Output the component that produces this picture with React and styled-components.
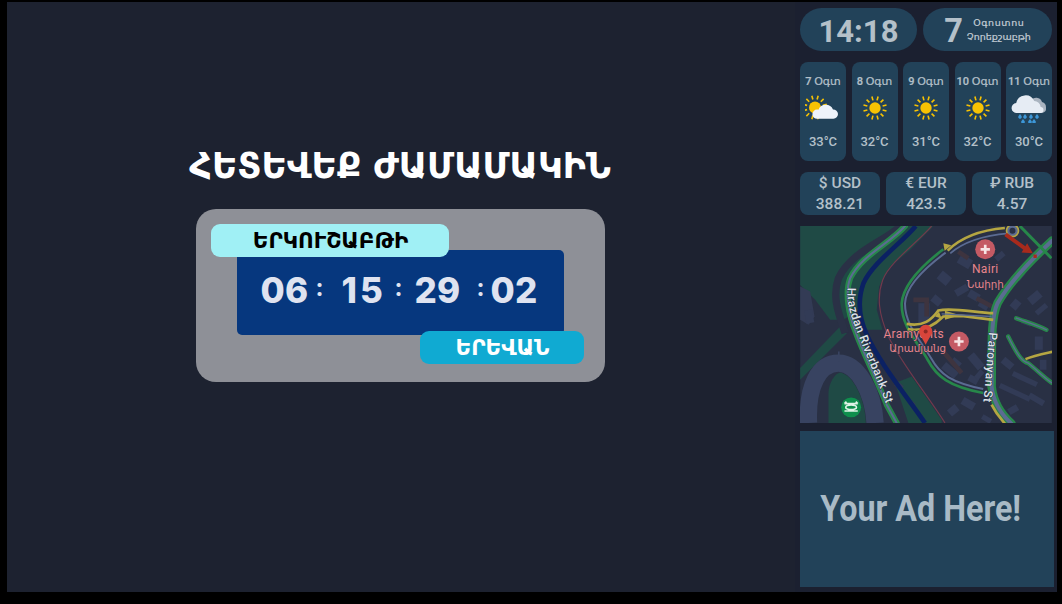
import React from "react";
import styled, { createGlobalStyle } from "styled-components";

const Global = createGlobalStyle`
  html, body { margin: 0; padding: 0; background: #000; }
  #root { width: 1062px; height: 604px; overflow: hidden; }
`;

const Screen = styled.div`
  width: 1062px; height: 604px; box-sizing: border-box; background: #000;
  padding: 2px 5px 12px 7px; display: flex;
  font-family: Roboto, "DejaVu Sans", sans-serif;
`;
const Main = styled.main`
  flex: 1; background: #1d2230; display: flex; flex-direction: column; align-items: center;
  padding: 146px 2px 0 0; min-width: 0;
`;
const Title = styled.h1`
  margin: 0; color: #fff; font: 700 34.8px/36px "DejaVu Sans", sans-serif; white-space: nowrap;
`;
const Card = styled.section`
  position: relative; margin-top: 25px; width: 409px; height: 173px; box-sizing: border-box;
  background: #8e9097; border-radius: 20px; padding: 41px 41px 0 41px;
`;
const Timer = styled.div`
  width: 327px; height: 85px; background: #06377e; border-radius: 5px;
  display: flex; align-items: flex-start; padding: 20px 0 0 24px; box-sizing: border-box;
  color: #dfe3f0; font: 800 35px/40px Inter, sans-serif;
`;
const Seg = styled.span`
  width: ${p => p.$w}px; flex: none; letter-spacing: ${p => p.$ls || 0.3}px;
`;
const Colon = styled.span`
  width: ${p => p.$w}px; flex: none; font-size: 24px; font-weight: 700; line-height: 36px; padding-left: 1px; box-sizing: border-box;
`;
const Tag = styled.div`
  position: absolute; height: 33px; border-radius: 9px; display: flex; align-items: center; justify-content: center;
  padding-left: 2px; box-sizing: border-box;
  font: 700 21.5px/1 "DejaVu Sans", sans-serif;
  background: ${p => p.$bg}; color: ${p => p.$fg};
  width: ${p => p.$w}px; left: ${p => p.$l}px; top: ${p => p.$t}px;
`;
const Side = styled.aside`
  width: 262px; background: #1b2030; display: flex; flex-direction: column;
  padding: 6px 0 0 5px; box-sizing: border-box;
`;
const TopRow = styled.div`
  display: flex; gap: 6px; width: 252px;
`;
const Pill = styled.div`
  height: 43px; border-radius: 22px; background: #224259; color: #b4c0c9;
  display: flex; align-items: center; justify-content: center; box-sizing: border-box;
  width: ${p => p.$w}px;
`;
const Clock = styled.span`
  font: 700 31px/1 Roboto, sans-serif; margin-top: 3px;
`;
const DayNum = styled.span`
  font: 700 32.5px/1 Roboto, sans-serif; margin: 3px 4px 0 0;
`;
const DateText = styled.div`
  display: flex; flex-direction: column; align-items: center; gap: 3px;
  font: 500 9.5px/11px "DejaVu Sans", sans-serif; color: #c4ced6; -webkit-text-stroke: 0.2px #c4ced6;
  span:first-child { letter-spacing: 0.6px; }
`;
const WeatherRow = styled.div`
  display: flex; justify-content: space-between; width: 252px; margin-top: 11px;
`;
const Day = styled.div`
  width: 46px; height: 99px; background: #224259; border-radius: 8px; color: #b4c0c9;
  display: flex; flex-direction: column; align-items: center; box-sizing: border-box; padding-top: 13px;
`;
const DayName = styled.div`
  font: 500 11px/14px Roboto, "DejaVu Sans", sans-serif; white-space: nowrap; height: 14px; -webkit-text-stroke: 0.2px #b4c0c9;
`;
const IconBox = styled.div`
  margin-top: 6px; width: 36px; height: 28px; display: flex; justify-content: center; flex: none;
`;
const Temp = styled.div`
  margin-top: 11px; font: 500 13px/16px Roboto, sans-serif;
`;
const RateRow = styled.div`
  display: flex; justify-content: space-between; width: 252px; margin-top: 11px;
`;
const Rate = styled.div`
  width: 80px; height: 43px; background: #224259; border-radius: 8px; color: #b4c0c9;
  display: flex; flex-direction: column; align-items: center; justify-content: center;
  font: 500 15.5px/21px Roboto, "DejaVu Sans", sans-serif;
`;
const MapBox = styled.div`
  margin-top: 11px; width: 252px; height: 197px; overflow: hidden; line-height: 0;
`;
const Ad = styled.div`
  margin-top: 8px; width: 254px; height: 156px; background: #224259; color: #a9bac6;
  display: flex; align-items: center; justify-content: center; padding-right: 13px; box-sizing: border-box;
  font: 700 37.5px/1 Roboto, sans-serif; white-space: nowrap;
`;
const AdText = styled.span`
  display: inline-block; transform: scaleX(0.86);
`;

const Sun = ({ cx = 16, cy = 13, r = 5.7, rays = 12 }) => (
  <g>
    {Array.from({ length: rays }).map((_, i) => {
      const a = (i * 2 * Math.PI) / rays + Math.PI / 12;
      return (
        <line key={i}
          x1={cx + Math.cos(a) * (r + 2.2)} y1={cy + Math.sin(a) * (r + 2.2)}
          x2={cx + Math.cos(a) * (r + 6.2)} y2={cy + Math.sin(a) * (r + 6.2)}
          stroke="#f7c203" strokeWidth="1.6" />
      );
    })}
    <circle cx={cx} cy={cy} r={r} fill="#f7c203" />
  </g>
);
const SunIcon = () => <svg width="32" height="28" viewBox="0 0 32 28"><Sun /></svg>;
const PartlyIcon = () => (
  <svg width="36" height="28" viewBox="0 0 36 28">
    <Sun cx={10} cy={12.5} r={6} />
    <path transform="translate(3 0.8)" d="M9 23a4.6 4.6 0 0 1 0-9.2c.8 0 1 .1 1.4.2A8 8 0 0 1 25 13.6a4.8 4.8 0 0 1 5 4.6A4.8 4.8 0 0 1 25.4 23Z" fill="#eef3fa" />
  </svg>
);
const RainIcon = () => (
  <svg width="36" height="28" viewBox="0 0 36 28">
    <path d="M20 6a6 6 0 0 1 11 1a5.5 5.5 0 0 1 4 5.5a5 5 0 0 1 -4 5.5H24Z" fill="#aab4c0" />
    <path d="M6 18a5 5 0 0 1 -.8-10a9.5 9.5 0 0 1 18-2a6.5 6.5 0 0 1 6.5 6a3 3 0 0 1 -.5 6Z" fill="#e6ecf4" />
    {[[9,22],[14,22],[20,22],[26,22],[12,27],[19,27],[23,27]].map(([x,y],i)=>(
      <path key={i} d={`M${x} ${y-3}l1.5 2a1.8 1.8 0 1 1 -3 0Z`} fill="#3d97d8" />
    ))}
  </svg>
);

const Road = ({ d, outer = "#27874a", inner = "#5b6b92", w = 16, iw = 6 }) => (
  <g fill="none" strokeLinecap="round" strokeLinejoin="round">
    <path d={d} stroke={outer} strokeWidth={w} />
    <path d={d} stroke={inner} strokeWidth={iw} />
  </g>
);
const Cross = ({ x, y }) => (
  <g>
    <circle cx={x} cy={y} r="30" fill="#c45a64" />
    <path d={`M${x-14} ${y}h28M${x} ${y-14}v28`} stroke="#f7e4e4" strokeWidth="8" />
  </g>
);

const blds = [
  [430,160,36,30,40],[480,200,40,22,-30],[410,230,30,24,40],[520,215,34,24,30],[370,250,34,60,0],[550,250,30,16,30],
  [490,110,40,30,30],[600,100,30,18,-40],[660,150,26,30,40],[700,220,40,26,-40],[720,260,40,16,-40],[650,240,24,28,40],
  [440,440,50,24,40],[520,470,30,20,30],[620,420,36,22,40],[650,470,80,16,25],[610,510,100,16,25],
  [700,530,50,18,30],[640,560,30,20,-30],[500,540,40,24,30],[460,560,30,24,-40],[560,590,30,16,30],[720,350,24,40,0],
  [735,420,20,30,0],[545,450,16,30,40],[470,420,30,14,40],[340,545,20,14,40],[300,490,24,16,40],[30,270,24,40,-10],
  [680,300,30,16,20],[530,400,26,50,-40],
];

const RoadMap = () => (
  <svg width="252" height="197" viewBox="15 18 756 592" style={{ display: "block" }}>
    <rect x="15" y="18" width="756" height="592" fill="#293044" />
    <path d="M15 18H415L345 90L285 140L252 200L245 270L262 330L215 330L190 270L145 300L105 300L60 240L15 195Z" fill="#1f4a45" />
    <path d="M15 445L135 320L155 340L30 465L15 480Z" fill="#1f4a45" />
    <path d="M300 490L350 470L440 600V610H340Z" fill="#1f4a45" />
    <path d="M15 200L45 215L58 290L40 315L15 300Z" fill="#333b55" />
    <path d="M315 18C280 60 170 90 130 175C110 230 130 280 150 340" fill="none" stroke="#2a3146" strokeWidth="22" />
    {blds.map(([x,y,w,h,r],i)=>(
      <rect key={i} x={x} y={y} width={w} height={h} fill="#323b56" transform={`rotate(${r} ${x+w/2} ${y+h/2})`} />
    ))}
    <path d="M355 240h40v50M490 95l30 20M545 235l45 24M440 390l60 70" fill="none" stroke="#3e343f" strokeWidth="14" />
    <path d="M40 610C35 500 70 430 130 430C190 430 235 520 240 610" fill="none" stroke="#384361" strokeWidth="52" />
    <path d="M100 610V520C100 490 120 460 135 458C175 465 210 540 212 610Z" fill="#1f4a45" />
    <path d="M131 395v30" stroke="#384361" strokeWidth="5" />
    <Road d="M330 18C285 70 200 105 165 175C150 215 158 280 183 340C205 400 250 490 275 555L305 610" w={18} iw={6} />
    <path d="M362 18C325 65 235 125 205 190C187 240 190 290 215 345C250 425 335 530 390 610" fill="none" stroke="#0b2163" strokeWidth="14" />
    <path d="M410 18C370 65 285 125 263 180C245 230 250 280 280 350C315 425 400 530 450 610" fill="none" stroke="#71394c" strokeWidth="3.5" />
    <path d="M445 88C390 130 325 190 320 250C318 320 370 370 398 420C425 470 460 500 565 520" fill="none" stroke="#27874a" strokeWidth="8" />
    <path d="M452 98C395 140 332 195 330 250C328 315 380 365 408 415C435 465 470 488 565 508" fill="none" stroke="#5b6b92" strokeWidth="6" />
    <path d="M458 92C500 50 560 30 630 24" fill="none" stroke="#b5a642" strokeWidth="8" />
    <path d="M466 100C510 62 570 46 640 40" fill="none" stroke="#5b6b92" strokeWidth="5" />
    <path d="M445 70l24 6l-20 16Z" fill="#b5a642" />
    <Road d="M772 62C725 105 645 185 608 250C585 300 592 400 590 500C595 545 620 585 650 612" w={26} iw={12} />
    <path d="M675 18L770 115" stroke="#27874a" strokeWidth="9" />
    <circle cx="653" cy="32" r="18" fill="#5b6b92" stroke="#b5a642" strokeWidth="5" />
    <circle cx="653" cy="32" r="9" fill="#293044" />
    <path d="M632 43L690 85" stroke="#a82a1c" strokeWidth="12" />
    <path d="M680 98L714 100L697 70Z" fill="#a82a1c" />
    <rect x="716" y="104" width="10" height="10" fill="#a82a1c" />
    <path d="M335 312C385 322 410 300 430 272C470 262 540 278 595 280" fill="none" stroke="#b5a642" strokeWidth="8" />
    <path d="M338 328C390 338 425 310 445 290L500 288L595 300" fill="none" stroke="#b5a642" strokeWidth="8" />
    <path d="M450 273l46 13l-46 14Z" fill="#b5a642" />
    <path d="M420 290l12 -14l8 20Z" fill="#b5a642" />
    <path d="M440 282L590 290" stroke="#5b6b92" strokeWidth="4" />
    <Road d="M664 295C690 305 725 315 755 330" w={13} iw={4} />
    <Road d="M640 350C665 400 680 425 700 430C725 450 750 475 772 490" w={13} iw={4} />
    <path d="M692 418C715 408 745 402 772 396" fill="none" stroke="#b5a642" strokeWidth="8" />
    <path d="M590 555C605 585 620 600 630 612" fill="none" stroke="#b5a642" strokeWidth="8" />
    <Cross x={571} y={88} />
    <Cross x={492} y={365} />
    <g fontFamily="Roboto, 'DejaVu Sans', sans-serif" fontWeight="400" textAnchor="middle" fill="#e8858c" stroke="#293044" strokeWidth="3" paintOrder="stroke">
      <text x="571" y="160" fontSize="36" letterSpacing="1">Nairi</text>
      <text x="571" y="203" fontSize="31">Նաիրի</text>
      <text x="356" y="354" fontSize="36" letterSpacing="1">Aramyants</text>
      <text x="368" y="396" fontSize="31">Արամյանց</text>
    </g>
    <path d="M392 375C380 350 372 345 372 335a20 20 0 0 1 40 0C412 345 404 350 392 375Z" fill="#d8453b" />
    <circle cx="392" cy="335" r="6" fill="#8f2a25" />
    <defs>
      <path id="rvb" d="M158 204C152 240 168 300 191 350C211 405 248 485 271 548" />
      <path id="prn" d="M582 338C578 400 572 490 563 570" />
    </defs>
    <g fontFamily="Roboto, sans-serif" fontWeight="500" fontSize="36" fill="#dde2ea" stroke="#293044" strokeWidth="3" paintOrder="stroke">
      <text letterSpacing="1.2"><textPath href="#rvb">Hrazdan Riverbank St</textPath></text>
      <text letterSpacing="1.4"><textPath href="#prn">Paronyan St</textPath></text>
    </g>
    <circle cx="168" cy="563" r="30" fill="#0f8f4d" />
    <path d="M148 552h40M148 574h40M154 546l-6 6M182 546l6 6M152 563a16 7 0 0 1 32 0a16 7 0 0 1 -32 0" fill="none" stroke="#dff3e6" strokeWidth="5" />
  </svg>
);

const days = [
  ["7 Օգտ", "33°C", <PartlyIcon />],
  ["8 Օգտ", "32°C", <SunIcon />],
  ["9 Օգտ", "31°C", <SunIcon />],
  ["10 Օգտ", "32°C", <SunIcon />],
  ["11 Օգտ", "30°C", <RainIcon />],
];
const rates = [["$ USD", "388.21"], ["€ EUR", "423.5"], ["₽ RUB", "4.57"]];

export default function App() {
  return (
    <Screen>
      <Global />
      <Main>
        <Title>ՀԵՏԵՎԵՔ ԺԱՄԱՄԱԿԻՆ</Title>
        <Card>
          <Timer>
            <Seg $w={54}>06</Seg>
            <Colon $w={27}>:</Colon>
            <Seg $w={52} $ls={3}>15</Seg>
            <Colon $w={21}>:</Colon>
            <Seg $w={61}>29</Seg>
            <Colon $w={15}>:</Colon>
            <Seg $w={50}>02</Seg>
          </Timer>
          <Tag $bg="#a0f0f5" $fg="#000" $w={238} $l={15} $t={15}>ԵՐԿՈՒՇԱԲԹԻ</Tag>
          <Tag $bg="#10aad2" $fg="#fff" $w={164} $l={224} $t={122}>ԵՐԵՎԱՆ</Tag>
        </Card>
      </Main>
      <Side>
        <TopRow>
          <Pill $w={117}><Clock>14:18</Clock></Pill>
          <Pill $w={129}>
            <DayNum>7</DayNum>
            <DateText><span>Օգոստոս</span><span>Չորեքշաբթի</span></DateText>
          </Pill>
        </TopRow>
        <WeatherRow>
          {days.map(([n, t, ic]) => (
            <Day key={n}>
              <DayName>{n}</DayName>
              <IconBox>{ic}</IconBox>
              <Temp>{t}</Temp>
            </Day>
          ))}
        </WeatherRow>
        <RateRow>
          {rates.map(([c, v]) => (
            <Rate key={c}><span>{c}</span><span>{v}</span></Rate>
          ))}
        </RateRow>
        <MapBox><RoadMap /></MapBox>
        <Ad><AdText>Your Ad Here!</AdText></Ad>
      </Side>
    </Screen>
  );
}
